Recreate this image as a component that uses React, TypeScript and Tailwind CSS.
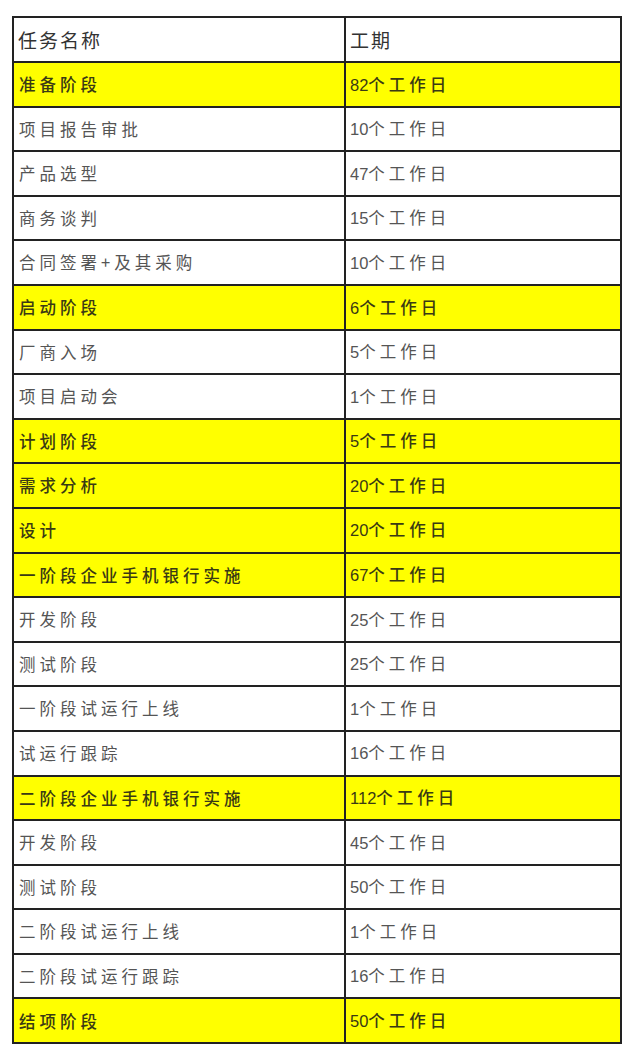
const rows: { name: string; days: string; phase?: boolean }[] = [
  { name: "准备阶段", days: "82", phase: true },
  { name: "项目报告审批", days: "10" },
  { name: "产品选型", days: "47" },
  { name: "商务谈判", days: "15" },
  { name: "合同签署+及其采购", days: "10" },
  { name: "启动阶段", days: "6", phase: true },
  { name: "厂商入场", days: "5" },
  { name: "项目启动会", days: "1" },
  { name: "计划阶段", days: "5", phase: true },
  { name: "需求分析", days: "20", phase: true },
  { name: "设计", days: "20", phase: true },
  { name: "一阶段企业手机银行实施", days: "67", phase: true },
  { name: "开发阶段", days: "25" },
  { name: "测试阶段", days: "25" },
  { name: "一阶段试运行上线", days: "1" },
  { name: "试运行跟踪", days: "16" },
  { name: "二阶段企业手机银行实施", days: "112", phase: true },
  { name: "开发阶段", days: "45" },
  { name: "测试阶段", days: "50" },
  { name: "二阶段试运行上线", days: "1" },
  { name: "二阶段试运行跟踪", days: "16" },
  { name: "结项阶段", days: "50", phase: true },
];

export default function App() {
  return (
    <div
      className="min-h-[1063px] bg-white pl-[12px] pt-[16px]"
      style={{ fontFamily: '"Noto Sans CJK SC", "Noto Sans", sans-serif' }}
    >
      <table className="w-[608px] table-fixed border-collapse border-2 border-[#222]">
        <colgroup>
          <col className="w-[332px]" />
          <col className="w-[276px]" />
        </colgroup>
        <tbody>
          <tr className="h-[45px] bg-white text-[19px] text-[#333] tracking-[2px]">
            <td className="border-2 border-[#222] pl-[4px] align-middle leading-none">任务名称</td>
            <td className="border-2 border-[#222] pl-[4px] align-middle leading-none">工期</td>
          </tr>
          {rows.map((r, i) => (
            <tr
              key={i}
              className={
                r.phase
                  ? "h-[44.6px] bg-[#ffff00] text-[#3a3a14] font-medium"
                  : "h-[44.6px] bg-white text-[#555]"
              }
            >
              <td className="border-2 border-[#222] pl-[5px] align-middle text-[16.5px] leading-none tracking-[4px]">
                {r.name}
              </td>
              <td className="border-2 border-[#222] pl-[4px] align-middle text-[16.5px] leading-none">
                <span className="tracking-[0px]" style={{ fontFamily: '"Liberation Sans", sans-serif' }}>
                  {r.days}
                </span>
                <span className="tracking-[4px]">个工作日</span>
              </td>
            </tr>
          ))}
        </tbody>
      </table>
    </div>
  );
}
